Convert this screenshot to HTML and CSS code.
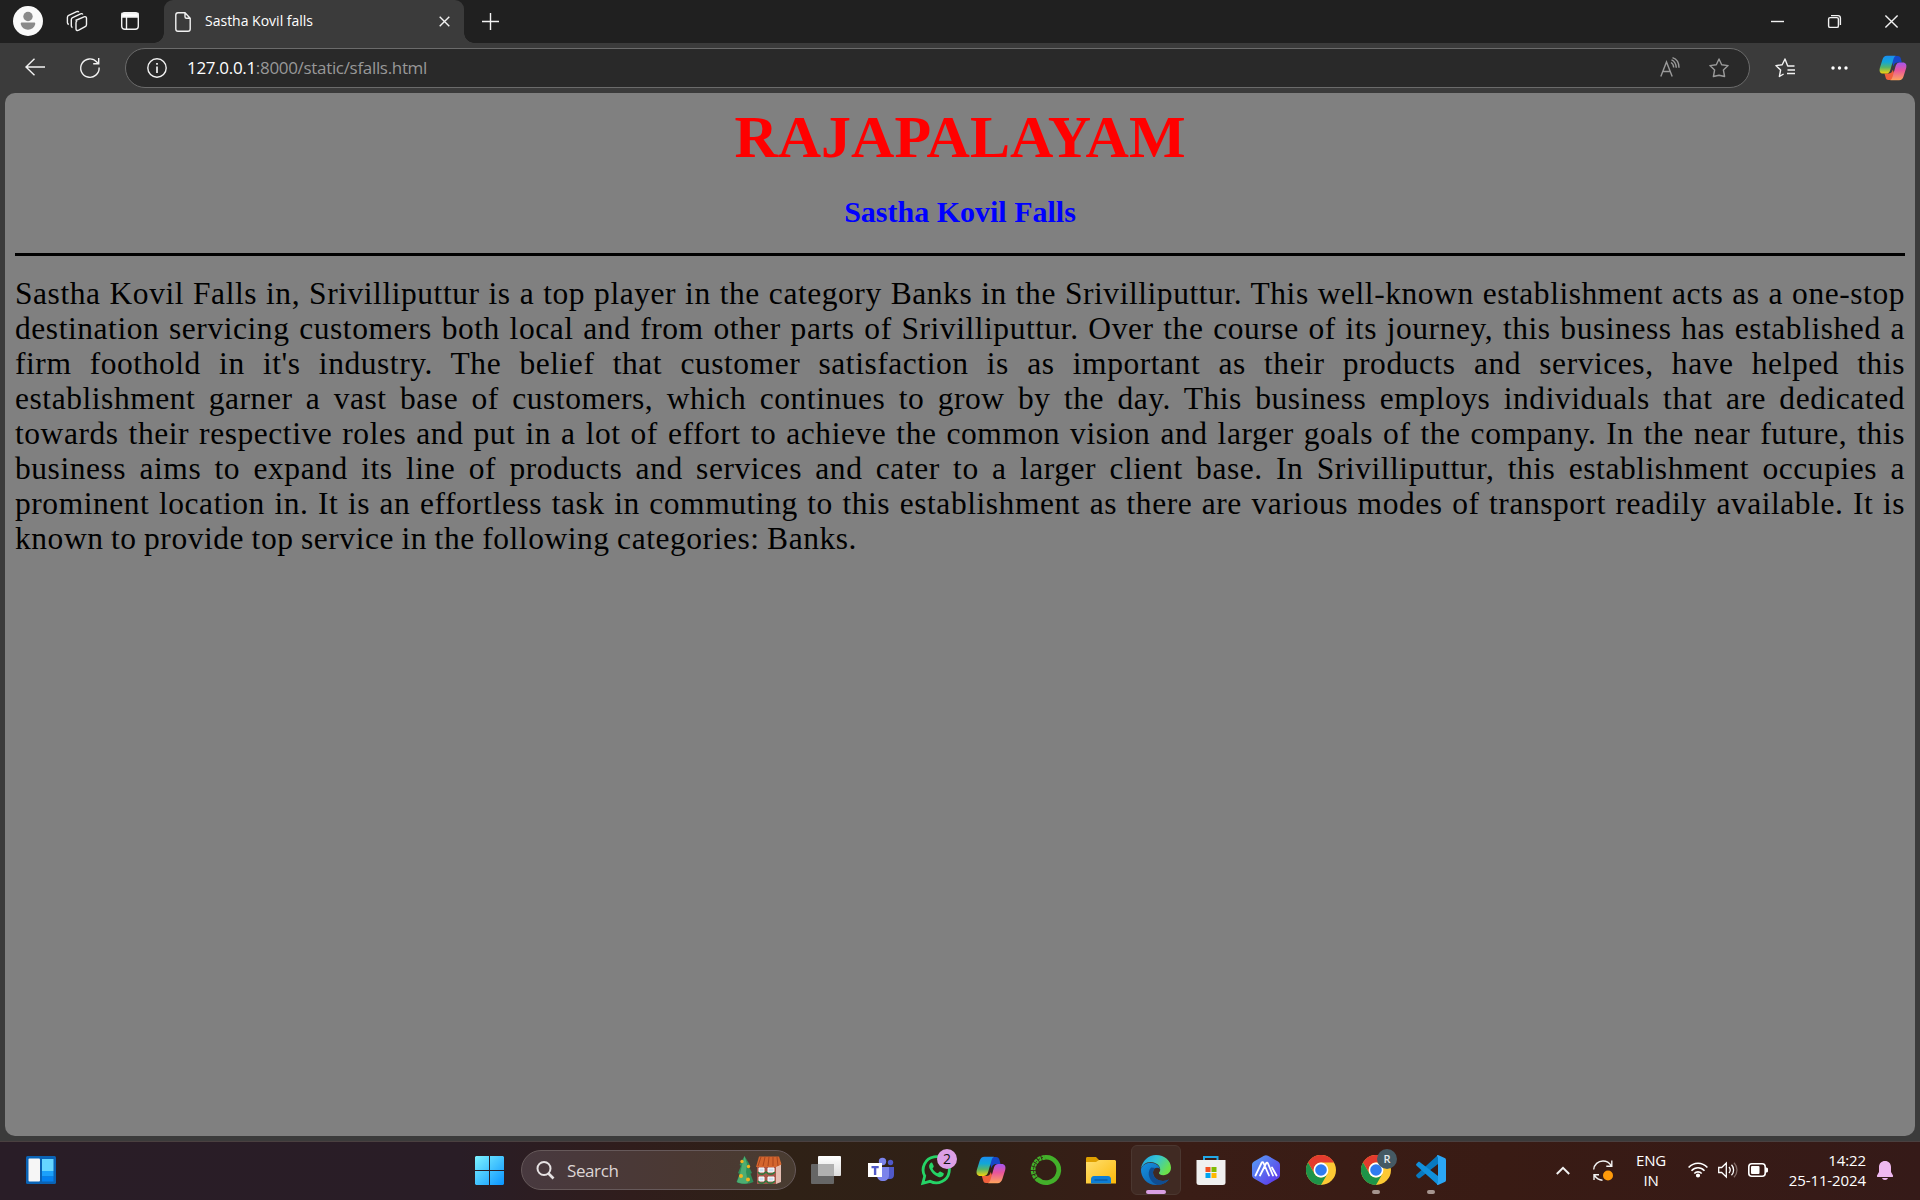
FILE: index.html
```html
<!DOCTYPE html>
<html lang="en">
<head>
<meta charset="utf-8">
<title>Sastha Kovil falls</title>
<link rel="stylesheet" href="styles.css">
</head>
<body>
<svg class="defs" width="0" height="0" aria-hidden="true">
  <defs>
    <linearGradient id="cpA" x1="0" y1="0" x2="0" y2="1"><stop offset="0" stop-color="#1b8df0"/><stop offset=".35" stop-color="#12a6d8"/><stop offset=".65" stop-color="#56b46a"/><stop offset="1" stop-color="#f7d20c"/></linearGradient>
    <linearGradient id="cpB" x1="0" y1="0" x2="0" y2="1"><stop offset="0" stop-color="#a356f0"/><stop offset=".45" stop-color="#e8559b"/><stop offset="1" stop-color="#ffa45c"/></linearGradient>
    <linearGradient id="win" x1="0" y1="0" x2="1" y2="1"><stop offset="0" stop-color="#7df3ff"/><stop offset="1" stop-color="#0a94ff"/></linearGradient>
    <linearGradient id="tv" x1="0" y1="0" x2="0" y2="1"><stop offset="0" stop-color="#fff"/><stop offset="1" stop-color="#dcdcdc"/></linearGradient>
    <linearGradient id="fold" x1="0" y1="0" x2="1" y2="1"><stop offset="0" stop-color="#ffdf70"/><stop offset="1" stop-color="#fbb908"/></linearGradient>
    <linearGradient id="edgeTop" x1="0" y1="0" x2="1" y2=".5"><stop offset="0" stop-color="#1b9de2"/><stop offset=".5" stop-color="#35c5d4"/><stop offset="1" stop-color="#6be04a"/></linearGradient>
    <linearGradient id="edgeLow" x1="0" y1="0" x2="1" y2="1"><stop offset="0" stop-color="#1590df"/><stop offset="1" stop-color="#0c59a4"/></linearGradient>
    <linearGradient id="hex" x1="0" y1="0" x2="1" y2="1"><stop offset="0" stop-color="#57a2f5"/><stop offset="1" stop-color="#5d2ee8"/></linearGradient>
    <symbol id="copilot" viewBox="0 0 30 28">
      <path d="M17 1h3c2 0 3 1 3.500 3l1 4h-4c-3 0-4 1-5 4l-3-8z" fill="#1647c8"/>
      <path d="M13 27h-3c-2 0-2.500-1-3-3l-1.200-4h4c3 0 4-1 5-4l3 8z" fill="#f0603c"/>
      <path d="M8.500.8H18c-1.500.8-2 2-2.700 4.200l-3 10.500C11.200 19 10 20 7 20H4.500C1 20 0 17.500.8 14L3.600 5C4.400 2.300 6 .8 8.500.8z" fill="url(#cpA)"/>
      <path d="M21.500 27.200H12c1.500-.8 2-2 2.700-4.200l3-10.500C18.800 9 20 8 23 8h2.500c3.500 0 4.500 2.500 3.700 6l-2.800 9c-.8 2.700-2.400 4.200-4.900 4.200z" fill="url(#cpB)"/>
    </symbol>
    <symbol id="chrome" viewBox="0 0 30 30">
      <circle cx="15" cy="15" r="15" fill="#fcc934"/>
      <path d="M2 7.500A15 15 0 0 1 28 7.500H15a7.500 7.500 0 0 0-6.500 11z" fill="#e33b2e"/>
      <path d="M2 7.500A15 15 0 0 0 15 30l6.500-11.300A7.500 7.500 0 0 1 8.500 18.700z" fill="#1e9348"/>
      <circle cx="15" cy="15" r="7.400" fill="#fff"/><circle cx="15" cy="15" r="5.800" fill="#2f7bf0"/>
    </symbol>
  </defs>
</svg>

<header class="tabbar">
  <svg class="avatar" width="30" height="30" viewBox="0 0 30 30"><circle cx="15" cy="15" r="15" fill="#fafafa"/><circle cx="15" cy="10.500" r="4.700" fill="#8a8a8a"/><path d="M9 16.500h12c1 0 1.500.5 1.200 1.800-.8 3.600-3.600 5.400-7.200 5.400s-6.400-1.800-7.200-5.400C7.500 17 8 16.500 9 16.500z" fill="#8a8a8a"/></svg>
  <svg class="workspaces line" width="22" height="22" viewBox="0 0 22 22"><path d="M9.500 10.500 18 6.800c1.300-.5 2.500.1 2.500 1.500v6.200c0 1-.4 1.700-1.300 2.200l-6.500 3.500c-1.600.8-2.700.2-2.700-1.500v-6c0-1 .5-1.700 1.300-2.100M6.500 17.500c-.8-.2-1.200-.8-1.200-1.700V9.700c0-1 .5-1.700 1.300-2.100l8-3.800c.8-.4 1.800-.2 2.200.7M2.800 14.500C1.900 14.200 1.400 13.600 1.400 12.500V7.500c0-1 .4-1.700 1.300-2.100l8-3.700c.9-.4 1.800-.2 2.200.6"/></svg>
  <svg class="tabactions line" width="18" height="18" viewBox="0 0 18 18"><rect x=".7" y=".7" width="16.600" height="16.600" rx="3"/><path d="M1 1.500h16V5H1z" fill="#fff"/><path d="M5.500 5v12"/></svg>
  <div class="tab">
    <svg class="line" width="16" height="20" viewBox="0 0 16 20"><path d="M3 .8h7l5.200 5.400V17c0 1.300-.8 2.200-2.200 2.200H3C1.600 19.200.8 18.300.8 17V3C.8 1.700 1.600.8 3 .8zM10 1v3.800c0 1 .5 1.500 1.500 1.500H15"/></svg>
    <span class="tab-title">Sastha Kovil falls</span>
    <svg class="line close" width="11" height="11" viewBox="0 0 11 11"><path d="m.7.7 9.600 9.600m0-9.600L.7 10.300"/></svg>
  </div>
  <svg class="line newtab" width="17" height="17" viewBox="0 0 17 17"><path d="M8.500 0v17M0 8.500h17"/></svg>
  <div class="winbtns">
    <svg class="line" width="13" height="13" viewBox="0 0 13 13"><path d="M0 6.500h13"/></svg>
    <svg class="line" width="13" height="13" viewBox="0 0 13 13"><rect x=".6" y="2.600" width="9.800" height="9.800" rx="1.500"/><path d="M3 .6h7c1.500 0 2.400.9 2.400 2.400v7"/></svg>
    <svg class="line" width="13" height="13" viewBox="0 0 13 13"><path d="m.4.4 12.200 12.200m0-12.200L.4 12.600"/></svg>
  </div>
</header>

<nav class="toolbar">
  <svg class="line back" width="20" height="18" viewBox="0 0 20 18"><path d="M20 9H1M9.500.7 1 9l8.500 8.300"/></svg>
  <svg class="line reload" width="20" height="21" viewBox="0 0 20 21"><path d="M19.100 10.500A9.200 9.200 0 1 1 16.800 5l1.500 1.700M18.700 1v5.800h-5.500"/></svg>
  <div class="address">
    <svg class="line" width="20" height="20" viewBox="0 0 20 20"><circle cx="10" cy="10" r="9.200"/><path d="M10 8.500V15M10 5v1.800" stroke-width="1.700"/></svg>
    <span class="url"><b>127.0.0.1</b>:8000/static/sfalls.html</span>
    <svg class="dim read" width="20" height="20" viewBox="0 0 20 20"><path d="m.8 18.500 5.700-14.500 5.700 14.500M3 13.500h7.200M11 4.500c1.700 1 2.600 2.700 2.700 5M11.500 1.800c3 1.200 4.600 4 4.800 8M12.500-.3c4 1.300 6.500 5 6.500 10"/></svg>
    <svg class="dim star" width="20" height="20" viewBox="0 0 20 20"><path d="m10 1 2.700 5.800 6.400.8-4.700 4.400 1.200 6.500L10 17.200l-5.600 1.300L5.600 12 .9 7.600l6.400-.8z" stroke-linejoin="round"/></svg>
  </div>
  <svg class="line favs" width="20" height="20" viewBox="0 0 20 20"><path d="M19.500 8h-6.800L10 1 7.200 6.800.9 7.600 5.600 12l-1.200 6.500L8.600 16M12.500 12H20M12 15.500h8" stroke-linejoin="round"/></svg>
  <svg class="dots" width="17" height="4" viewBox="0 0 17 4"><g fill="#fff"><circle cx="2" cy="2" r="1.700"/><circle cx="8.500" cy="2" r="1.700"/><circle cx="15" cy="2" r="1.700"/></g></svg>
  <svg class="cp" width="28" height="26"><use href="#copilot"/></svg>
</nav>

<main class="page">
  <h1>RAJAPALAYAM</h1>
  <h2>Sastha Kovil Falls</h2>
  <hr>
  <p>
    <span>Sastha Kovil Falls in, Srivilliputtur is a top player in the category Banks in the Srivilliputtur. This well-known establishment acts as a one-stop</span>
    <span>destination servicing customers both local and from other parts of Srivilliputtur. Over the course of its journey, this business has established a</span>
    <span>firm foothold in it's industry. The belief that customer satisfaction is as important as their products and services, have helped this</span>
    <span>establishment garner a vast base of customers, which continues to grow by the day. This business employs individuals that are dedicated</span>
    <span>towards their respective roles and put in a lot of effort to achieve the common vision and larger goals of the company. In the near future, this</span>
    <span>business aims to expand its line of products and services and cater to a larger client base. In Srivilliputtur, this establishment occupies a</span>
    <span>prominent location in. It is an effortless task in commuting to this establishment as there are various modes of transport readily available. It is</span>
    <span class="last">known to provide top service in the following categories: Banks.</span>
  </p>
</main>

<footer class="taskbar">
  <svg class="widgets" width="30" height="28" viewBox="0 0 30 28"><rect width="30" height="28" rx="1.500" fill="#0a63b5"/><rect x="2.500" y="2.500" width="11.500" height="23" rx="1" fill="#f6f6f6"/><path d="M16 3h11.500v12H16z" fill="#66d6ff"/><path d="M16 15h11.500v5.500H16z" fill="#1ba1fb"/><path d="M16 20.500h11.500v5H16z" fill="#0481ef"/></svg>
  <svg class="start" width="29" height="29" viewBox="0 0 29 29"><path d="M1 0h13v14H0V1zM15 0h13l1 1v13H15zM0 15h14v14H1l-1-1zM15 15h14v13l-1 1H15z" fill="url(#win)"/></svg>
  <div class="search">
    <svg width="19" height="19" viewBox="0 0 19 19" fill="none" stroke="#e6e2e3" stroke-width="2"><circle cx="8" cy="7.500" r="6.500"/><path d="m12.500 12.500 5 5" stroke-width="2.600"/></svg>
    <span>Search</span>
    <svg class="village" width="46" height="30" viewBox="0 0 46 30"><path d="M8.500 1 14 10l-1.500.7L16 18l-1.500.7L17.500 27c-5 2.500-13 2.500-17 0l3-8-1.500-1L5 10.700 3.500 10z" fill="#2f8d58"/><path d="M8.500 1 11 9l-1 8 2 11c-4 1-8 .5-11-1l3-8 2-9z" fill="#4dad72"/><g fill="#f4b41f"><circle cx="6" cy="6.500" r="1.700"/><circle cx="12.500" cy="11.500" r="1.700"/><circle cx="5" cy="21" r="2"/><circle cx="12" cy="24.500" r="2"/></g><path d="M21 10h19v19H21z" fill="#a9564b"/><path d="M40 10l5-3v20l-5 2z" fill="#e4bdb2"/><path d="M23 1.500h20l2.500 8L40 12H20z" fill="#d4652e"/><path d="m25 2-3 9m7-9-2 9m6-9-1 9m5-9v9m4-9 1 9" stroke="#a9451d"/><g fill="#cfe0f2" stroke="#fff"><path d="M23 13h5v4h-5zM32 13h6v4h-6zM23 22h5v4h-5zM32 22h6v4h-6z"/></g><path d="M22 17c2 3 5 3 8 0 3 3 6 3 9 0M22 26c2 3 5 3 8 0 3 3 6 3 9 0" fill="none" stroke="#2f7a40" stroke-width="1.500"/></svg>
  </div>
  <div class="apps">
    <div class="app"><svg width="30" height="30" viewBox="0 0 30 30"><rect y="9" width="23" height="20" rx="1" fill="#666"/><rect x="7" y="1" width="23" height="20" rx="1" fill="url(#tv)"/><path d="M7 9h16v12H7z" fill="#b0b0b0"/></svg></div>
    <div class="app"><svg width="30" height="30" viewBox="0 0 30 30"><circle cx="24.500" cy="7.500" r="2.700" fill="#5059c9"/><path d="M20 12h8v8c0 2.700-1.700 4-4 4h-4z" fill="#5059c9"/><circle cx="16.500" cy="6.500" r="3.700" fill="#7b83eb"/><path d="M11 12h12v8c0 4-2.500 6-6 6s-6-2-6-6z" fill="#7b83eb"/><rect x="2" y="8" width="14" height="14" fill="#fff"/><path d="M5.500 11h7.200v2.200h-2.400V20H7.900v-6.800H5.500z" fill="#5059c9"/></svg></div>
    <div class="app"><svg width="30" height="30" viewBox="0 0 30 30"><path d="M1.800 28.300 3.700 21A13.100 13.100 0 1 1 9 26.300z" fill="none" stroke="#25d366" stroke-width="2.800"/><path d="M9.500 8c-1.400 1.300-1.900 3.500-.9 5.600 1.800 4 4.700 6.900 8.900 8.300 2.200.7 4.200-.2 5-1.900.4-1 .4-1.700-.2-2l-3-1.500c-.5-.2-.9 0-1.200.4l-1.100 1.400c-2.400-.8-4.300-2.500-5.500-4.900l1.100-1.500c.2-.3.200-.7 0-1.100L11.300 8c-.3-.7-1.200-.6-1.800 0z" fill="#25d366"/><circle cx="26" cy="4" r="10" fill="#dc9fe6"/><text x="26" y="9" class="badge two">2</text></svg></div>
    <div class="app"><svg width="30" height="28"><use href="#copilot"/></svg></div>
    <div class="app"><svg width="30" height="30" viewBox="0 0 30 30"><path d="M14 2.300a12.700 12.700 0 1 1-7.500 22" fill="none" stroke="#43b02a" stroke-width="4.700"/><path d="M14 2.300A12.700 12.700 0 0 0 7 25" fill="none" stroke="#43b02a" stroke-width="4.700" stroke-dasharray="3.200 .8"/><path d="M12 2.500A12.700 12.700 0 0 0 5.500 23" fill="none" stroke="#2f2117" stroke-width=".9" stroke-dasharray="2 1.500"/></svg></div>
    <div class="app"><svg width="30" height="30" viewBox="0 0 30 30"><path d="M0 3.500C0 2.500.5 2 1.500 2H10l3 3v5H0z" fill="#dfa000"/><path d="M0 7h10l3-2h16l1 1v22.500H0z" fill="url(#fold)"/><path d="M5 28.500V24c0-1.500 1-3 3-3h14c2 0 3 1.500 3 3v4.500z" fill="#0d7ed6"/><path d="M8.500 25h13" stroke="#064c91"/></svg></div>
    <div class="app active"><svg width="30" height="30" viewBox="0 0 30 30"><path d="M0 14C1 6 7.500 0 15 0c8.800 0 15 6 15 12.600 0 4.600-3.300 7.600-7.600 7.600-3 0-4.400-1.200-4.400-2.200 0-.9 1.200-1.300 1.200-3.600C19.200 10 14 7 9.400 7 4.500 7 1.500 10 0 14z" fill="url(#edgeTop)"/><path d="M0 14c1.500-4 5-6.300 9.400-6.300 5 0 9 3 9.700 6.300-2.500-2.400-7.100-1.500-7.100 3.500 0 5 5 8.500 10 8.500 2.500 0 4.500-.7 6-1.700C25.500 28 20.500 30 15 30 6 30-.5 22.500 0 14z" fill="url(#edgeLow)"/><path d="M10 12.500c-5 5.500-1.500 15 6.500 17.400 5 0 9-2.500 11.500-5.600-7 4-16 0-16-6.800 0-2 1-3.500 2.500-4.500z" fill="#104d91"/></svg></div>
    <div class="app"><svg width="30" height="30" viewBox="0 0 30 30"><path d="M8 7V2h13.500v5" fill="none" stroke="#22a9e8" stroke-width="2"/><path d="M.5 5h29v22.500c0 1.700-1 2.500-2.500 2.500H3c-1.500 0-2.500-.8-2.500-2.500z" fill="#f0f0f0"/><path d="M9.500 12h5v5h-5z" fill="#f25022"/><path d="M15.500 12h5v5h-5z" fill="#7fba00"/><path d="M9.500 18h5v5h-5z" fill="#00a4ef"/><path d="M15.500 18h5v5h-5z" fill="#ffb900"/></svg></div>
    <div class="app"><svg width="30" height="30" viewBox="0 0 30 30"><path d="M13 .8c1.300-.8 2.700-.8 4 0l10 5.700c1.300.8 2 2 2 3.500v10c0 1.500-.7 2.700-2 3.500l-10 5.700c-1.300.8-2.700.8-4 0L3 23.500c-1.300-.8-2-2-2-3.500V10c0-1.500.7-2.700 2-3.500z" fill="url(#hex)"/><path d="M4.500 20.500 10.500 8c.6-1.200 1.500-1.200 2 0L18 20.500M9 20.500l6-12c.6-1.200 1.500-1.200 2 0L22 20.500M21 12.500l4.500 8" fill="none" stroke="#fff" stroke-width="1.800" stroke-linecap="round"/></svg></div>
    <div class="app"><svg width="30" height="30"><use href="#chrome"/></svg></div>
    <div class="app open"><svg width="30" height="30"><use href="#chrome"/><circle cx="26" cy="4" r="10" fill="#455a64"/><text x="26" y="8" class="badge letter">R</text></svg></div>
    <div class="app open"><svg width="30" height="30" viewBox="0 0 30 30"><path d="M22 0v9L4 23c-.7.500-1.400.5-2 0L.5 21.500c-.6-.7-.5-1.500.1-2z" fill="#0879bf"/><path d="M22 30v-9L4 7.200c-.7-.5-1.400-.5-2 0L.5 8.700c-.6.700-.5 1.500.1 2z" fill="#1190dc"/><path d="M22 0l6.700 3c.8.4 1.300 1.200 1.300 2v20c0 .9-.5 1.600-1.300 2L22 30c-.7 0-1-.5-1-1l1-1.500V2.500L21 1c0-.5.300-1 1-1z" fill="#2ba6f4"/></svg></div>
  </div>
  <div class="tray">
    <svg class="line chev" width="14" height="9" viewBox="0 0 14 9"><path d="m.8 8 6.200-6.200L13.200 8" stroke-width="2"/></svg>
    <svg class="line sync" width="20" height="21" viewBox="0 0 20 21"><path d="M.7 9.500C1.200 4.500 5 1 10 1c3.500 0 6.500 1.800 8.300 4.800M18.800.5v5.700h-5.500M1 20v-5.200h5M1.500 15.500c2 3 4.500 4.500 8 4.800"/><circle cx="15" cy="15.500" r="5" fill="#ff9a0a" stroke="none"/></svg>
    <div class="lang">ENG<br>IN</div>
    <svg class="wifi" width="20" height="16" viewBox="0 0 20 16" fill="none" stroke="#fff" stroke-width="1.600"><path d="M.6 5.500c5.300-5.700 13.500-5.700 18.800 0M3.500 8.800c3.700-4 9.300-4 13 0M6.300 11.500c2-2.200 5.400-2.200 7.400 0"/><circle cx="10" cy="13.500" r="1.300" fill="#fff"/></svg>
    <svg class="volume" width="20" height="16" viewBox="0 0 20 16" fill="none" stroke="#fff" stroke-width="1.300"><path d="M.7 5.500h3L8.300 1v14l-4.600-4.500h-3zM11 5c1.500 1.800 1.500 4.200 0 6M13.500 2.800c2.800 3 2.800 7.400 0 10.400"/><path d="M16 .8c4 4.300 4 10 0 14.400" stroke="#806a65"/></svg>
    <svg class="battery" width="20" height="14" viewBox="0 0 20 14"><rect x=".8" y=".8" width="16.400" height="12.400" rx="3" fill="none" stroke="#fff" stroke-width="1.600"/><rect x="3" y="3" width="8.500" height="8" rx="1" fill="#fff"/><path d="M18 4.500c1.200 0 2 .5 2 1.500v2c0 1-.8 1.500-2 1.500z" fill="#fff"/></svg>
    <div class="clock">14:22<br>25-11-2024</div>
    <svg class="bell" width="16" height="19" viewBox="0 0 16 19"><path d="M8 0c3.600 0 6 2.600 6 6v5l2 3.500c.2.800 0 1.500-.8 1.500H.8c-.8 0-1-.7-.8-1.500L2 11V6c0-3.400 2.400-6 6-6zM5 17h6c-.5 1.300-1.500 2-3 2s-2.500-.7-3-2z" fill="#efb9f0"/></svg>
  </div>
</footer>
</body>
</html>
```
FILE: styles.css
```css
* { box-sizing: border-box; }
body {
  margin: 0;
  width: 1920px;
  height: 1200px;
  display: flex;
  flex-direction: column;
  overflow: hidden;
  background: #3b3b3b;
  color: #fff;
  font-family: "Open Sans", "Noto Sans", sans-serif;
}
svg { display: block; flex: none; overflow: visible; }
.defs { position: absolute; }
.line { fill: none; stroke: #f2f2f2; stroke-width: 1.4; }
.dim { fill: none; stroke: #9a9a9a; stroke-width: 1.4; }

/* Tab strip */
.tabbar { height: 43px; flex: none; display: flex; align-items: center; background: #202020; }
.tabbar > svg { margin-bottom: 1px; }
.avatar { margin-left: 13px; }
.workspaces { margin-left: 23px; }
.tabactions { margin-left: 33px; }
.tab {
  position: relative;
  width: 300px;
  height: 43px;
  margin-left: 25px;
  padding: 0 14px 0 11px;
  display: flex;
  align-items: center;
  background: #3b3b3b;
  border-radius: 9px 9px 0 0;
}
.tab::before, .tab::after {
  content: "";
  position: absolute;
  bottom: 0;
  width: 10px;
  height: 10px;
}
.tab::before { left: -10px; background: radial-gradient(circle at 0 0, transparent 9.500px, #3b3b3b 10px); }
.tab::after { right: -10px; background: radial-gradient(circle at 100% 0, transparent 9.500px, #3b3b3b 10px); }
.tab-title { margin: 0 0 2px 14px; font-size: 14px; white-space: nowrap; }
.close { margin-left: auto; }
.newtab { margin-left: 18px; }
.winbtns { margin-left: auto; padding: 0 22px 1px 0; display: flex; gap: 44px; }

/* Address row */
.toolbar { height: 50px; flex: none; display: flex; align-items: center; }
.back { margin: 0 0 2px 25px; }
.reload { margin: 0 0 1px 35px; }
.address {
  width: 1625px;
  height: 40px;
  margin-left: 25px;
  padding: 0 20px 0 21px;
  display: flex;
  align-items: center;
  background: #292929;
  border: 1px solid #6b6b6b;
  border-radius: 20px;
}
.url { margin: 0 0 2px 20px; color: #989898; font-size: 17px; letter-spacing: -0.32px; white-space: nowrap; }
.url b { color: #fff; font-weight: 400; }
.read { margin-left: auto; }
.star { margin-left: 29px; }
.favs { margin-left: 25px; }
.dots { margin: 0 0 1px 36px; }
.cp { margin-left: 31px; }

/* Document */
.page {
  height: 1043px;
  flex: none;
  margin: 0 5px;
  padding: 10px;
  background: #808080;
  border-radius: 10px;
  color: #000;
  font-family: "Liberation Serif", "Times New Roman", serif;
}
h1 { margin: 0; font-size: 60px; line-height: 68px; text-align: center; color: #f00; }
h2 { margin: 24px 0 0; font-size: 30px; line-height: 34px; text-align: center; color: #00f; }
hr { margin: 24px 0 20px; border: 0; height: 3px; background: #000; }
p { margin: 0; font-family: Georgia, "Liberation Serif", serif; font-size: 31.5px; line-height: 35px; letter-spacing: 0.55px; }
p span { display: block; white-space: nowrap; text-align: justify; text-align-last: justify; word-spacing: -3px; }
p .last { width: 842px; }

/* Taskbar */
.taskbar {
  height: 59px;
  margin-top: 5px;
  padding-bottom: 2px;
  flex: none;
  display: flex;
  align-items: center;
  border-top: 1px solid #4a4040;
  background: linear-gradient(90deg, #291d27 0, #291d26 460px, #301d1c 630px, #2f2116 780px, #302016 960px, #3a1d16 1180px, #391b14 1500px, #351a18 1920px);
}
.widgets { margin-left: 26px; }
.start { margin-left: 419px; }
.search {
  width: 275px;
  height: 40px;
  margin-left: 17px;
  padding: 0 13px 0 14px;
  display: flex;
  align-items: center;
  border: 1px solid #66595a;
  border-radius: 20px;
  background: linear-gradient(90deg, #48393f, #4b3933 60%, #493c31);
}
.search span { margin-left: 12px; font-size: 17px; letter-spacing: -0.4px; color: #ddd5d5; }
.village { margin-left: auto; }
.apps { display: grid; grid-template-columns: repeat(12, 55px); margin-left: 2.5px; }
.app { position: relative; height: 50px; display: grid; place-items: center; }
.active::before {
  content: "";
  position: absolute;
  inset: 0 2.5px;
  border: 1px solid #4b3730;
  border-radius: 6px;
  background: #402a23;
}
.active svg { position: relative; }
.active::after, .open::after {
  content: "";
  position: absolute;
  bottom: 1px;
  width: 8px;
  height: 4px;
  border-radius: 2px;
  background: #a6958f;
}
.active::after { width: 20px; background: #d99fe3; }
.badge { text-anchor: middle; }
.two { font-size: 14px; fill: #111; }
.letter { font-size: 11px; font-weight: 600; fill: #e6eaec; }
.tray { margin-left: auto; padding-right: 27px; display: flex; align-items: center; font-size: 15px; line-height: 20px; }
.sync { margin-left: 23px; }
.lang { width: 40px; margin-left: 18px; text-align: center; letter-spacing: -0.2px; }
.wifi { margin-left: 17px; }
.volume { margin-left: 10px; }
.battery { margin-left: 10px; }
.clock { width: 90px; margin-left: 8px; text-align: right; letter-spacing: -0.1px; white-space: nowrap; }
.bell { margin-left: 11px; }
```
